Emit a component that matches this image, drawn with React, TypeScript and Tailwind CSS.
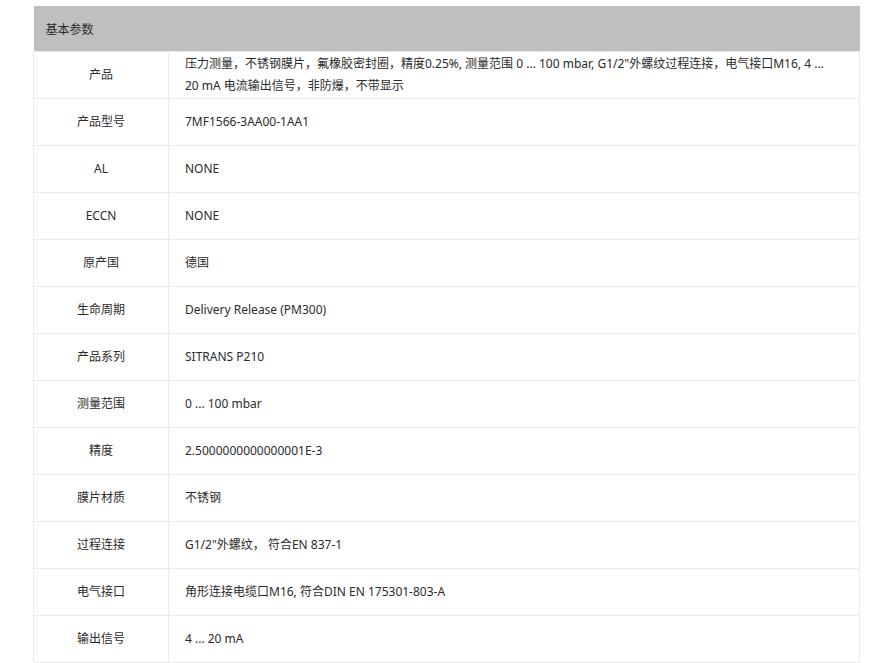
const rows: [string, string][] = [
    [
        "产品",
        "压力测量，不锈钢膜片，氟橡胶密封圈，精度0.25%, 测量范围 0 ... 100 mbar, G1/2\"外螺纹过程连接，电气接口M16, 4 ... 20 mA 电流输出信号，非防爆，不带显示",
    ],
    ["产品型号", "7MF1566-3AA00-1AA1"],
    ["AL", "NONE"],
    ["ECCN", "NONE"],
    ["原产国", "德国"],
    ["生命周期", "Delivery Release (PM300)"],
    ["产品系列", "SITRANS P210"],
    ["测量范围", "0 ... 100 mbar"],
    ["精度", "2.5000000000000001E-3"],
    ["膜片材质", "不锈钢"],
    ["过程连接", "G1/2\"外螺纹， 符合EN 837-1"],
    ["电气接口", "角形连接电缆口M16, 符合DIN EN 175301-803-A"],
    ["输出信号", "4 ... 20 mA"],
];

const App = () => {
    return (
        <div className="min-h-screen w-full bg-white pt-[6px] pl-[33px] font-['Noto_Sans','Noto_Sans_CJK_SC',sans-serif] text-[12px] text-[#2b2b2b]">
            <table className="w-[827px] table-fixed border-collapse">
                <colgroup>
                    <col className="w-[135px]" />
                    <col />
                </colgroup>
                <thead>
                    <tr className="h-[45px] bg-[#bfbfbf]">
                        <th
                            colSpan={2}
                            className="px-3 pt-[4px] text-left font-normal"
                        >
                            基本参数
                        </th>
                    </tr>
                </thead>
                <tbody>
                    {rows.map(([label, value]) => (
                        <tr key={label} className="h-[47px]">
                            <td className="border border-[#ebebeb] pt-[1px] text-center">
                                {label}
                            </td>
                            <td className="border border-[#ebebeb] pt-[1px] pr-5 pl-4 leading-[22px]">
                                {value}
                            </td>
                        </tr>
                    ))}
                </tbody>
            </table>
        </div>
    );
};
export default App;
